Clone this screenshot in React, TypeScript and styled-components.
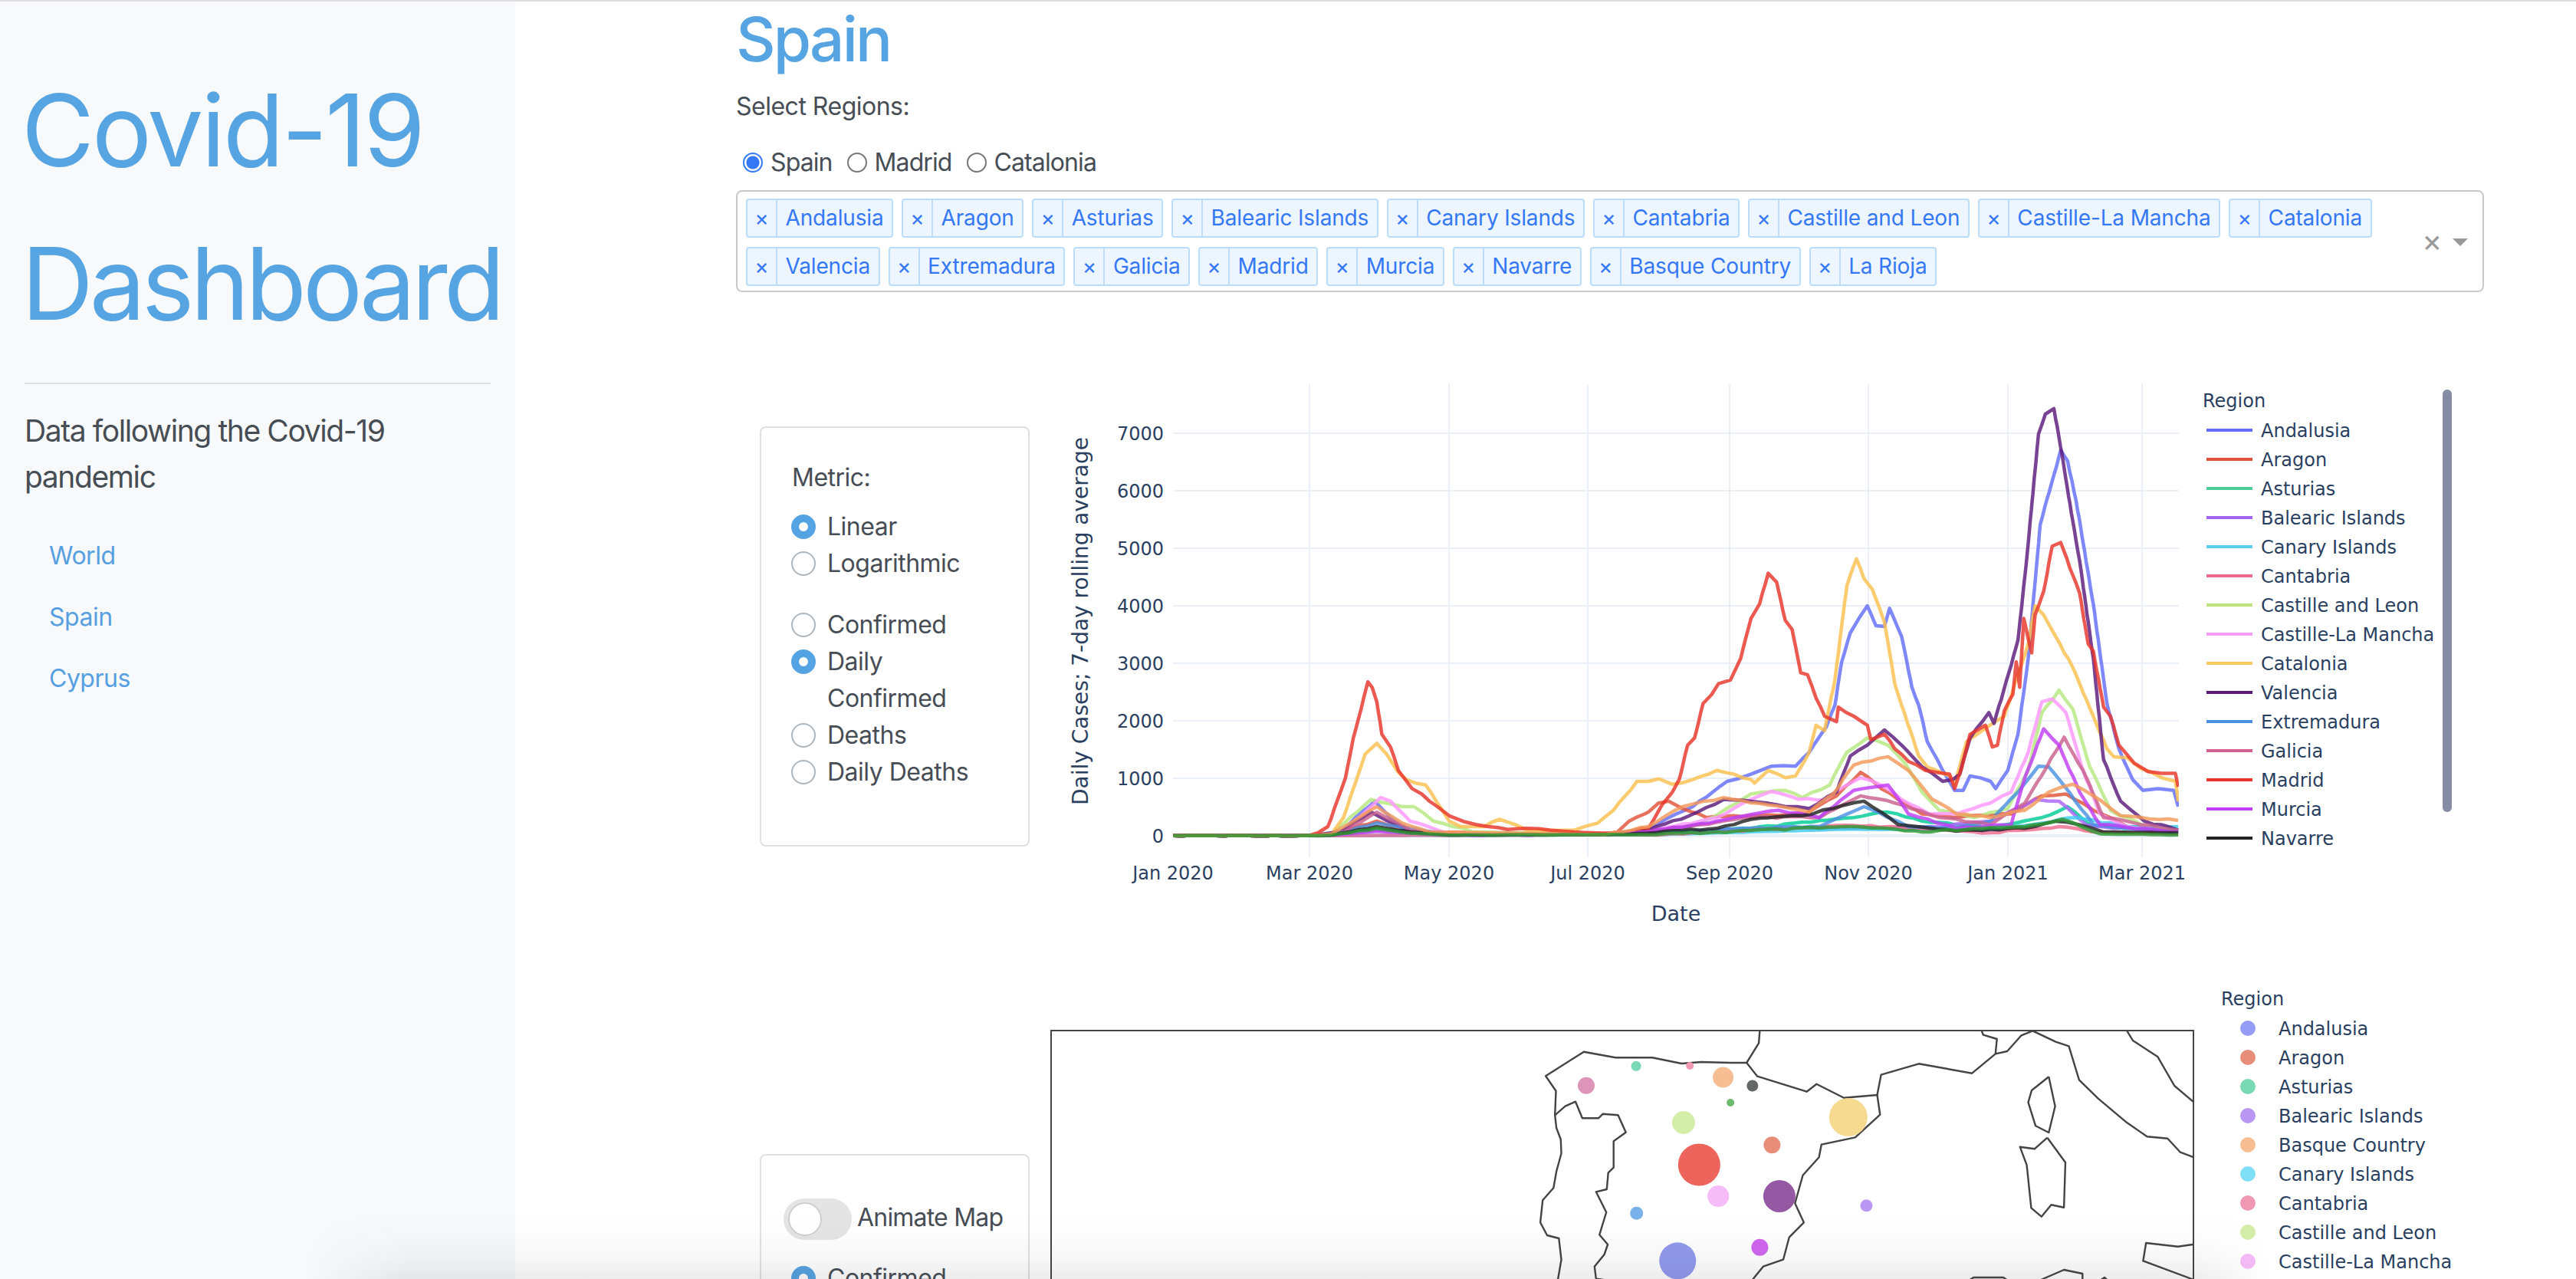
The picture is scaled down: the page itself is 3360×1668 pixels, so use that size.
import React from "react";
import styled, { createGlobalStyle } from "styled-components";

const Global = createGlobalStyle`
  html, body { margin: 0; padding: 0; background: #fff; }
  * { box-sizing: border-box; }
`;

const Page = styled.div`
  position: relative;
  width: 3360px;
  height: 1668px;
  overflow: hidden;
  display: flex;
  border-top: 2px solid #dddde2;
  font-family: Inter, "Liberation Sans", sans-serif;
  font-size: 32px;
  line-height: 48px;
  letter-spacing: -0.5px;
  color: #474d55;
  background: #fff;
`;
const Sidebar = styled.aside`
  flex: 0 0 672px;
  width: 672px;
  min-width: 0;
  background: #f8f9fa;
  padding: 68px 32px 0;
`;
const AppTitle = styled.h1`
  margin: 0 0 0 -4px;
  font-size: 130px;
  line-height: 200px;
  font-weight: 400;
  color: #56a5e2;
`;
const TitleLine = styled.span<{ $track: number }>`
  display: block;
  letter-spacing: ${(p) => p.$track}px;
`;
const Rule = styled.hr`
  margin: 29px 0 31px;
  border: 0;
  border-top: 2px solid #e1e2e4;
`;
const Lead = styled.p`
  margin: 0 0 33px;
  font-size: 39px;
  line-height: 60px;
  letter-spacing: -1.4px;
`;
const Nav = styled.nav`
  display: flex;
  flex-direction: column;
`;
const NavLink = styled.a`
  padding: 16px 32px;
  color: #56a0e2;
`;
const Main = styled.main`
  flex: 1;
  min-width: 0;
  padding: 1px 120px 0 288px;
`;
const PageTitle = styled.h2`
  margin: 0 0 16px;
  font-size: 80px;
  line-height: 96px;
  letter-spacing: -2.9px;
  font-weight: 500;
  color: #56a5e2;
`;
const FieldLabel = styled.div`
  margin-bottom: 25px;
`;
const InlineRadios = styled.div`
  display: flex;
  margin: 0 0 12px 9px;
  letter-spacing: -0.9px;
`;
const InlineRadio = styled.label`
  display: flex;
  align-items: center;
  margin-right: 19px;
`;
const NativeDot = styled.span<{ $on?: boolean }>`
  width: 26px;
  height: 26px;
  margin-right: 10px;
  border-radius: 50%;
  flex: none;
  border: ${(p) => (p.$on ? "2px solid #3478f6" : "2px solid #767676")};
  background: ${(p) => (p.$on ? "radial-gradient(circle, #3478f6 0 8px, #fff 9px)" : "#fff")};
`;
const SelectBox = styled.div`
  display: flex;
  align-items: center;
  height: 133px;
  border: 2px solid #c9c9c9;
  border-radius: 8px;
  padding: 9px 0 0 11px;
`;
const Chips = styled.div`
  flex: 1;
  align-self: flex-start;
  display: flex;
  flex-wrap: wrap;
  gap: 12px 11px;
`;
const Chip = styled.div`
  display: flex;
  height: 51px;
  border: 2px solid #bcdcfc;
  border-radius: 4px;
  background: #edf5fe;
  color: #3478f6;
  font-size: 28px;
  line-height: 46px;
  letter-spacing: -0.15px;
`;
const ChipClose = styled.span`
  width: 39px;
  text-align: center;
  border-right: 2px solid #bcdcfc;
`;
const ChipLabel = styled.span`
  padding: 0 10.5px;
`;
const SelectControls = styled.div`
  flex: 0 0 85px;
  display: flex;
  align-items: center;
  margin-top: -11px;
  color: #999;
`;
const ClearMark = styled.span`
  font-size: 40px;
  width: 38px;
  text-align: center;
`;
const Caret = styled.span`
  margin-left: 8px;
  margin-top: 4px;
  border-style: solid;
  border-width: 10px 10px 0;
  border-color: #999 transparent transparent;
`;
const GraphRow = styled.section<{ $h: number }>`
  display: flex;
  height: ${(p) => p.$h}px;
`;
const Card = styled.div<{ $top: number; $h: number; $pad: string }>`
  flex: 0 0 352px;
  margin: ${(p) => p.$top}px 0 0 31px;
  height: ${(p) => p.$h}px;
  padding: ${(p) => p.$pad};
  border: 2px solid #e0e0e0;
  border-radius: 8px;
  background: #fff;
`;
const Graph = styled.svg`
  flex: none;
  display: block;
  margin-left: 27px;
  overflow: hidden;
`;
const RadioGroup = styled.div`
  margin-top: 16px;
  & + & { margin-top: 32px; }
`;
const RadioRow = styled.div`
  position: relative;
  padding-left: 47px;
  margin-left: -1px;
`;
const Dot = styled.span<{ $on?: boolean }>`
  position: absolute;
  left: 0;
  top: 8px;
  width: 32px;
  height: 32px;
  border-radius: 50%;
  background: #fff;
  border: ${(p) => (p.$on ? "10.5px solid #55a3e2" : "2px solid #adb5bd")};
`;
const ToggleRow = styled.div`
  display: flex;
  align-items: center;
  gap: 7px;
  margin-bottom: 26px;
`;
const ToggleLabel = styled.span`
  margin-top: -4px;
  letter-spacing: -0.8px;
`;
const MapMetrics = styled.div`
  margin-left: 11px;
`;
const Track = styled.span`
  display: flex;
  align-items: center;
  width: 89px;
  height: 54px;
  padding-left: 6px;
  border-radius: 27px;
  background: #e4e4e4;
`;
const Knob = styled.span`
  width: 44px;
  height: 44px;
  border-radius: 50%;
  background: #fff;
  border: 2px solid #cfcfcf;
`;
const BottomShade = styled.div`
  position: absolute;
  left: 400px;
  bottom: 0;
  width: 2560px;
  height: 88px;
  pointer-events: none;
  background: linear-gradient(to bottom, rgba(50,50,60,0) 0%, rgba(50,50,60,.012) 35%, rgba(50,50,60,.045) 70%, rgba(50,50,60,.09) 100%);
  -webkit-mask-image: linear-gradient(to right, transparent 0, #000 5%, #000 96%, transparent 100%);
  mask-image: linear-gradient(to right, transparent 0, #000 5%, #000 96%, transparent 100%);
`;
const PlotText = styled.text`
  font-family: "DejaVu Sans", Verdana, sans-serif;
  font-size: 24px;
  letter-spacing: 0;
  fill: #2a3f5f;
`;
const AxisTitle = styled(PlotText)`
  font-size: 27px;
`;
const YTitle = styled(PlotText)`
  font-size: 28px;
`;

type P = [number, number][];
const z4 = (p: P): P => p.map(([x, y]) => [1380 + x / 1.96, 480 + y / 2.119]);
const z5 = (p: P): P => p.map(([x, y]) => [2150 + x / 2.24, 480 + y / 2.119]);
const z8 = (p: P): P => p.map(([x, y]) => [1900 + x / 1.568, 1300 + y / 3]);
const pts = (p: P) => p.map(([x, y]) => `${x.toFixed(1)},${y.toFixed(1)}`).join(" ");
const wobble = (i: number) => {
  const s = Math.sin(i * 12.9898) * 43758.5453;
  return (s - Math.floor(s) - 0.5) * 2;
};
// Adds the small day-to-day jitter that the plotted data has.
const jitter = (p: P): P => {
  const out: P = [];
  let k = 0;
  p.forEach(([x, y], i) => {
    if (i > 0) {
      const [x0, y0] = p[i - 1];
      const len = Math.hypot(x - x0, y - y0);
      const amp = y0 > 1080 && y > 1080 ? 0.3 : 1.3;
      const n = Math.floor(len / 11);
      for (let j = 1; j < n; j++) {
        const t = j / n;
        out.push([x0 + (x - x0) * t, y0 + (y - y0) * t + wobble(++k) * amp]);
      }
    }
    out.push([x, y]);
  });
  return out;
};
const curve = (a: P, b: P) => {
  const right = z5(b);
  const head: P = [[295, 1290], [640, 1290]];
  const mid = a.filter(([x]) => x > 640);
  const last = mid.length ? mid[mid.length - 1][0] : 640;
  const tail: P = last < 1380 ? [[1400, 1287]] : [];
  return pts(jitter([...z4([...head, ...mid, ...tail]).filter(([x]) => x < right[0][0]), ...right]));
};

const series: { c: string; d: string }[] = [
  { c: "#636efa", d: curve([[720,1285],[760,1240],[810,1195],[850,1240],[900,1275],[1000,1285]], [[0,1270],[130,1210],[230,1140],[300,1120],[360,1098],[430,1098],[470,1060],[520,990],[545,930],[565,810],[590,730],[615,690],[640,655],[665,710],[690,712],[705,662],[740,740],[770,880],[790,930],[815,1030],[860,1110],[895,1165],[920,1165],[940,1125],[1000,1140],[1015,1160],[1050,1110],[1080,1010],[1110,800],[1145,430],[1205,225],[1225,255],[1250,365],[1300,650],[1340,925],[1375,1050],[1415,1135],[1445,1165],[1490,1160],[1535,1165],[1548,1210]]) },
  { c: "#e0533a", d: curve([[700,1285],[815,1250],[900,1280],[1400,1285],[1430,1280],[1460,1250],[1500,1230]], [[0,1225],[30,1200],[60,1195],[100,1215],[170,1240],[300,1235],[460,1230],[550,1180],[620,1115],[680,1160],[800,1230],[900,1240],[1060,1230],[1150,1180],[1220,1175],[1300,1220],[1400,1265],[1548,1280]]) },
  { c: "#00cc96", d: curve([[700,1288],[815,1270],[1000,1288]], [[0,1285],[300,1270],[600,1240],[700,1225],[800,1250],[1000,1270],[1150,1240],[1225,1210],[1290,1260],[1548,1280]]) },
  { c: "#ab63fa", d: curve([[700,1288],[815,1275],[1000,1288]], [[0,1285],[400,1270],[800,1270],[1000,1250],[1130,1190],[1200,1195],[1280,1260],[1548,1285]]) },
  { c: "#3dcaee", d: curve([[1000,1289]], [[0,1288],[600,1272],[1000,1275],[1250,1240],[1400,1265],[1548,1265]]) },
  { c: "#ee6a8d", d: curve([[1000,1289]], [[0,1288],[600,1262],[1000,1282],[1200,1265],[1300,1280],[1548,1285]]) },
  { c: "#b6e880", d: curve([[700,1285],[800,1190],[880,1210],[910,1210],[960,1250],[1060,1280]], [[0,1280],[150,1260],[300,1175],[400,1165],[450,1185],[530,1150],[580,1060],[640,1020],[700,1040],[750,1090],[800,1170],[850,1220],[950,1240],[1050,1215],[1110,1110],[1150,950],[1200,888],[1240,940],[1290,1100],[1350,1220],[1450,1265],[1548,1275]]) },
  { c: "#ff97ff", d: curve([[720,1285],[790,1220],[825,1185],[850,1195],[900,1250],[1000,1285]], [[0,1280],[200,1240],[300,1190],[360,1168],[440,1190],[520,1190],[580,1150],[620,1130],[680,1150],[740,1190],[820,1230],[900,1230],[1000,1200],[1060,1170],[1110,1060],[1150,920],[1180,912],[1220,950],[1270,1110],[1320,1230],[1400,1265],[1548,1280]]) },
  { c: "#fbc04e", d: curve([[700,1285],[730,1240],[755,1160],[785,1065],[815,1035],[840,1065],[870,1115],[890,1135],[915,1145],[940,1150],[970,1200],[1000,1250],[1030,1265],[1090,1265],[1130,1245],[1170,1260],[1200,1275],[1320,1275],[1380,1255],[1420,1220],[1480,1140]], [[0,1140],[30,1133],[70,1148],[130,1135],[200,1110],[250,1120],[300,1135],[310,1145],[350,1110],[400,1130],[430,1125],[470,1060],[490,985],[515,1000],[545,860],[580,600],[608,525],[630,580],[655,610],[690,700],[720,870],[740,930],[790,1070],[815,1100],[880,1125],[895,1150],[930,1030],[990,990],[1040,960],[1110,760],[1130,655],[1155,680],[1190,740],[1240,825],[1300,960],[1340,1050],[1360,1072],[1400,1075],[1440,1105],[1500,1130],[1540,1140],[1548,1195]]) },
  { c: "#5b1a7b", d: curve([[720,1280],[800,1225],[900,1280],[1000,1288]], [[0,1275],[120,1235],[220,1190],[300,1195],[400,1210],[470,1215],[550,1170],[590,1070],[640,1040],[690,998],[740,1040],[800,1100],[860,1140],[890,1135],[910,1120],[940,1020],[995,950],[1010,980],[1060,820],[1080,750],[1105,530],[1140,180],[1160,125],[1185,110],[1200,190],[1240,420],[1260,530],[1300,800],[1330,1080],[1380,1195],[1450,1250],[1548,1275]]) },
  { c: "#4a90e2", d: curve([[700,1288],[815,1255],[1000,1288]], [[0,1280],[500,1265],[630,1210],[700,1240],[760,1265],[900,1270],[1000,1250],[1080,1170],[1140,1098],[1170,1100],[1230,1170],[1300,1260],[1548,1280]]) },
  { c: "#c9608f", d: curve([[720,1285],[815,1225],[900,1275],[1000,1288]], [[0,1280],[300,1240],[500,1240],[620,1180],[720,1200],[850,1240],[1000,1260],[1100,1200],[1215,1018],[1270,1110],[1330,1240],[1548,1275]]) },
  { c: "#e8352a", d: curve([[665,1282],[690,1265],[715,1190],[735,1130],[755,1020],[775,940],[792,865],[803,880],[815,920],[828,1010],[850,1045],[870,1110],[905,1160],[930,1175],[970,1210],[1000,1235],[1040,1252],[1100,1265],[1150,1273],[1200,1270],[1260,1275],[1320,1280],[1400,1283],[1450,1283],[1490,1270]], [[0,1270],[40,1205],[70,1170],[90,1135],[115,1040],[135,1020],[160,925],[185,900],[205,870],[240,860],[270,800],[300,690],[325,650],[350,565],[375,590],[400,695],[420,720],[445,840],[465,845],[490,910],[515,960],[550,975],[555,935],[600,960],[640,985],[650,1025],[690,1010],[720,1050],[760,1085],[810,1110],[880,1120],[895,1160],[915,1105],[940,1010],[985,985],[1005,1045],[1020,1040],[1040,945],[1065,900],[1075,810],[1085,880],[1097,690],[1120,785],[1130,680],[1155,615],[1180,490],[1205,480],[1240,570],[1260,620],[1285,760],[1300,780],[1330,935],[1350,960],[1375,1040],[1420,1090],[1460,1113],[1500,1118],[1540,1118],[1548,1155]]) },
  { c: "#c03cf5", d: curve([[700,1289],[815,1278],[1000,1289]], [[0,1280],[200,1250],[380,1220],[500,1240],[600,1165],[700,1150],[760,1230],[900,1270],[1060,1260],[1100,1130],[1155,995],[1200,1040],[1260,1170],[1320,1260],[1548,1280]]) },
  { c: "#222222", d: curve([[700,1288],[815,1265],[900,1280],[1000,1288]], [[0,1283],[200,1270],[300,1245],[450,1235],[540,1215],[630,1195],[680,1225],[730,1260],[900,1278],[1100,1270],[1190,1250],[1260,1260],[1330,1280],[1548,1282]]) },
  { c: "#f39a5a", d: curve([[700,1285],[770,1240],[815,1210],[880,1255],[950,1280]], [[0,1265],[100,1210],[220,1185],[350,1205],[470,1225],[540,1175],[600,1095],[700,1072],[760,1110],[830,1190],[900,1230],[1000,1240],[1100,1220],[1170,1170],[1240,1148],[1300,1180],[1380,1235],[1548,1248]]) },
  { c: "#2f9a33", d: curve([[700,1289],[815,1270],[900,1283],[1000,1289]], [[0,1288],[600,1265],[800,1280],[1100,1265],[1210,1245],[1320,1285],[1548,1288]]) },
];

const yTicks = [0, 1000, 2000, 3000, 4000, 5000, 6000, 7000];
const xTicks: [number, string][] = [[1530,"Jan 2020"],[1708,"Mar 2020"],[1890,"May 2020"],[2071,"Jul 2020"],[2256,"Sep 2020"],[2437,"Nov 2020"],[2619,"Jan 2021"],[2794,"Mar 2021"]];
const lineLegend: [string, string][] = [["Andalusia","#636efa"],["Aragon","#e0533a"],["Asturias","#4fcb97"],["Balearic Islands","#a364f5"],["Canary Islands","#5bcdef"],["Cantabria","#ee6a8d"],["Castille and Leon","#bde57f"],["Castille-La Mancha","#f79df7"],["Catalonia","#f5c862"],["Valencia","#5b1a7b"],["Extremadura","#4a90e2"],["Galicia","#d0608f"],["Madrid","#e8352a"],["Murcia","#c03cf5"],["Navarre","#222222"]];

const mapLegend: [string, string][] = [["Andalusia","#959cf6"],["Aragon","#e78d7a"],["Asturias","#79d9b5"],["Balearic Islands","#b997f3"],["Basque Country","#f6be92"],["Canary Islands","#7fdff6"],["Cantabria","#f199b2"],["Castille and Leon","#d4eeaa"],["Castille-La Mancha","#f5bcf7"]];

const bubbles: [number, number, number, string][] = [
  [265,344,11,"#dd94b8"],[367,268,6.5,"#79d9b5"],[477,267,5,"#f199b2"],[545,312,13.5,"#f6be92"],[605,345,7.5,"#636767"],[560,411,5,"#6dbb6d"],[464,489,15,"#d4eeaa"],[801,468,25,"#f6da90"],[645,577,11,"#e78d7a"],[496,654,27.5,"#ec645c"],[535,777,14,"#f5bcf7"],[660,777,21,"#9558a3"],[838,814,8,"#b997f3"],[368,844,8.5,"#7ab0ea"],[620,977,11,"#d066ef"],[452,1030,24,"#929aee"],
];
const borders: P[] = [
  [[620,127],[618,178],[593,255],[560,255],[500,252],[460,258],[400,235],[325,235],[260,212],[182,307],[203,365],[201,460],[204,510],[213,555],[214,610],[204,680],[198,745],[176,793],[171,880],[185,930],[209,942],[214,1025],[207,1104]],
  [[201,460],[222,425],[243,407],[257,472],[290,472],[299,455],[330,460],[346,527],[321,562],[321,665],[310,685],[307,750],[285,760],[306,840],[292,928],[309,966],[302,1005],[282,1052],[285,1100],[300,1104]],
  [[593,255],[615,308],[716,368],[736,338],[792,392],[860,381],[866,458],[815,547],[746,575],[741,625],[708,695],[692,805],[710,880],[680,938],[668,1025],[627,1052],[605,1104]],
  [[860,381],[868,302],[945,259],[1054,296],[1102,220],[1126,210],[1155,148],[1178,130],[1225,173],[1252,190],[1273,322],[1312,395],[1368,485],[1412,544],[1454,551],[1480,605],[1508,625]],
  [[1102,220],[1105,162],[1077,146],[1073,127]],
  [[1370,127],[1383,168],[1434,232],[1468,345],[1508,410]],
  [[1211,310],[1176,363],[1169,410],[1184,502],[1211,528],[1224,425],[1211,310]],
  [[1208,548],[1182,592],[1152,584],[1166,655],[1175,823],[1196,857],[1216,811],[1242,821],[1245,645],[1208,548]],
  [[1508,965],[1475,974],[1410,960],[1404,1030],[1508,1104]],
  [[1050,1104],[1057,1095],[1118,1095],[1125,1104]],
  [[1195,1104],[1242,1065],[1280,1080],[1280,1104]],
  [[1318,1104],[1325,1095],[1330,1104]],
];

const regions = ["Andalusia","Aragon","Asturias","Balearic Islands","Canary Islands","Cantabria","Castille and Leon","Castille-La Mancha","Catalonia","Valencia","Extremadura","Galicia","Madrid","Murcia","Navarre","Basque Country","La Rioja"];

const Radio = ({ on, children }: { on?: boolean; children: React.ReactNode }) => (
  <RadioRow><Dot $on={on} />{children}</RadioRow>
);

export default function App() {
  return (
    <Page>
      <Global />
      <Sidebar>
        <AppTitle>
          <TitleLine $track={-3}>Covid-19</TitleLine>
          <TitleLine $track={-5}>Dashboard</TitleLine>
        </AppTitle>
        <Rule />
        <Lead>Data following the Covid-19 pandemic</Lead>
        <Nav>
          <NavLink>World</NavLink>
          <NavLink>Spain</NavLink>
          <NavLink>Cyprus</NavLink>
        </Nav>
      </Sidebar>
      <Main>
        <PageTitle>Spain</PageTitle>
        <FieldLabel>Select Regions:</FieldLabel>
        <InlineRadios>
          <InlineRadio><NativeDot $on />Spain</InlineRadio>
          <InlineRadio><NativeDot />Madrid</InlineRadio>
          <InlineRadio><NativeDot />Catalonia</InlineRadio>
        </InlineRadios>
        <SelectBox>
          <Chips>
            {regions.map((r) => (
              <Chip key={r}><ChipClose>×</ChipClose><ChipLabel>{r}</ChipLabel></Chip>
            ))}
          </Chips>
          <SelectControls><ClearMark>×</ClearMark><Caret /></SelectControls>
        </SelectBox>
        <GraphRow $h={880}>
          <Card $top={175} $h={548} $pad="41px 40px 0">
            Metric:
            <RadioGroup>
              <Radio on>Linear</Radio>
              <Radio>Logarithmic</Radio>
            </RadioGroup>
            <RadioGroup>
              <Radio>Confirmed</Radio>
              <Radio on>Daily Confirmed</Radio>
              <Radio>Deaths</Radio>
              <Radio>Daily Deaths</Radio>
            </RadioGroup>
          </Card>
          <Graph width={1870} height={880} viewBox="1370 380 1870 880">
            <defs>
              <clipPath id="plot"><rect x="1530" y="490" width="1312" height="640" /></clipPath>
            </defs>
            {xTicks.slice(1).map(([x]) => <line key={x} x1={x} x2={x} y1={500} y2={1117} stroke="#ebf0f8" strokeWidth={2} />)}
            {yTicks.map((v) => <line key={v} x1={1530} x2={2842} y1={1089 - v * 0.075} y2={1089 - v * 0.075} stroke="#ebf0f8" strokeWidth={v === 0 ? 4 : 2} />)}
            <g clipPath="url(#plot)">
              {series.map((s) => <polyline key={s.c} points={s.d} fill="none" stroke={s.c} strokeWidth={4.5} strokeOpacity={0.82} strokeLinejoin="round" />)}
            </g>
            {yTicks.map((v) => <PlotText key={v} x={1518} y={1098 - v * 0.075} textAnchor="end">{v}</PlotText>)}
            {xTicks.map(([x, t]) => <PlotText key={t} x={x} y={1146} textAnchor="middle">{t}</PlotText>)}
            <AxisTitle x={2186} y={1200} textAnchor="middle">Date</AxisTitle>
            <YTitle transform="translate(1419 809) rotate(-90)" textAnchor="middle">Daily Cases; 7-day rolling average</YTitle>
            <PlotText x={2873} y={530}>Region</PlotText>
            {lineLegend.map(([n, c], i) => (
              <g key={n}>
                <line x1={2878} x2={2938} y1={560 + i * 38} y2={560 + i * 38} stroke={c} strokeWidth={4} />
                <PlotText x={2949} y={569 + i * 38}>{n}</PlotText>
              </g>
            ))}
            <rect x={3186} y={507} width={12} height={551} rx={6} fill="#858ca3" />
          </Graph>
        </GraphRow>
        <GraphRow $h={428}>
          <Card $top={244} $h={300} $pad="56px 0 0 29px">
            <ToggleRow>
              <Track><Knob /></Track>
              <ToggleLabel>Animate Map</ToggleLabel>
            </ToggleRow>
            <MapMetrics><Radio on>Confirmed</Radio></MapMetrics>
          </Card>
          <Graph width={1870} height={428} viewBox="1370 1260 1870 428">
            {borders.map((b, i) => <polyline key={i} points={pts(z8(b))} fill="none" stroke="#444" strokeWidth={2.4} strokeLinejoin="round" />)}
            <polyline points="1371,1700 1371,1343 2861,1343 2861,1700" fill="none" stroke="#444" strokeWidth={2} />
            {bubbles.map(([x, y, r, c], i) => {
              const [[cx, cy]] = z8([[x, y]]);
              return <circle key={i} cx={cx} cy={cy} r={r} fill={c} />;
            })}
            <PlotText x={2897} y={1310}>Region</PlotText>
            {mapLegend.map(([n, c], i) => (
              <g key={n}>
                <circle cx={2932} cy={1340 + i * 38} r={10} fill={c} />
                <PlotText x={2972} y={1349 + i * 38}>{n}</PlotText>
              </g>
            ))}
          </Graph>
        </GraphRow>
      </Main>
      <BottomShade />
    </Page>
  );
}
